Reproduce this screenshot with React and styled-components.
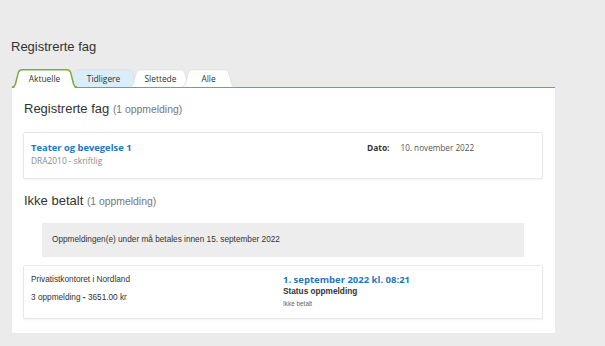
import React from "react";
import styled, { createGlobalStyle } from "styled-components";

const GREEN = "#7aac3b";
const BLUE = "#1f78bd";

const Global = createGlobalStyle`
  html, body { margin: 0; padding: 0; background: #ebebeb; }
  body { font-family: "Liberation Sans", Arial, sans-serif; color: #333; }
  * { box-sizing: border-box; }
`;

const Page = styled.div`
  padding: 39px 0 12px 12px;
  width: 555px;
`;

const PageTitle = styled.h1`
  margin: 0 0 14px -1px;
  font-size: 13px;
  line-height: 16px;
  font-weight: normal;
  color: #333;
`;

const TabRow = styled.div`
  display: flex;
  height: 18px;
  position: relative;
  z-index: 1;
`;

const TabItem = styled.div`
  position: relative;
  width: ${(p) => p.$w}px;
  height: 18px;
  margin-left: ${(p) => (p.$first ? 0 : -9)}px;
  z-index: ${(p) => p.$z};
  display: flex;
  align-items: center;
  justify-content: center;
  cursor: pointer;
`;

const TabShape = styled.svg`
  position: absolute;
  left: 0;
  top: 0;
  overflow: visible;
`;

const TabLabel = styled.span`
  position: relative;
  font-family: "Open Sans", sans-serif;
  font-size: 8.4px;
  line-height: 10px;
  color: #333;
  padding-top: 2px;
`;

const Panel = styled.section`
  background: #fff;
  border-top: 1.5px solid ${GREEN};
  padding: 13px 12px 13.5px 11px;
`;

const SectionTitle = styled.h2`
  margin: 0 0 0 1px;
  font-size: 13px;
  line-height: 16px;
  font-weight: normal;
  color: #333;
  & + * { margin-top: 13.5px; }
`;

const Count = styled.span`
  font-size: 10.4px;
  color: #777;
`;

const Card = styled.div`
  display: grid;
  grid-template-columns: ${(p) => p.$cols};
  border: 1px solid #e8e8e8;
  border-radius: 2px;
  box-shadow: 0 1px 2px rgba(0, 0, 0, 0.05);
  padding: ${(p) => p.$pad};
  margin-bottom: ${(p) => p.$mb || 0}px;
`;

const Col = styled.div`
  display: flex;
  flex-direction: column;
`;

const CourseName = styled.a`
  font-family: "Open Sans", sans-serif;
  font-weight: bold;
  font-size: 9.4px;
  line-height: 13px;
  color: ${BLUE};
  text-decoration: none;
`;

const CourseCode = styled.div`
  font-family: "Open Sans", sans-serif;
  font-size: 8.4px;
  line-height: 14px;
  color: #8a8a8a;
`;

const DateRow = styled.div`
  display: flex;
  gap: 11px;
  font-family: "Open Sans", sans-serif;
  font-size: 8.2px;
  line-height: 13px;
  color: #555;
`;

const DateLabel = styled.span`
  font-weight: bold;
  font-size: 8.4px;
  color: #333;
`;

const Notice = styled.div`
  margin: 13px 19px 8px;
  background: #ededed;
  padding: 11px 10px;
  font-size: 8.25px;
  line-height: 11.5px;
  color: #333;
`;

const PlainLine = styled.div`
  font-size: 8.25px;
  line-height: 12px;
  color: #333;
  margin-top: ${(p) => p.$mt || 0}px;
  b { font-weight: bold; }
`;

const StampDate = styled.a`
  font-family: "Open Sans", sans-serif;
  font-weight: bold;
  font-size: 9.5px;
  line-height: 12px;
  color: ${BLUE};
  text-decoration: none;
`;

const StatusLabel = styled.div`
  font-weight: bold;
  font-size: 8.25px;
  line-height: 11.5px;
  color: #333;
`;

const StatusValue = styled.div`
  font-size: 6.4px;
  line-height: 12px;
  color: #666;
`;

function tabPath(w, h, closed) {
  const s = 7;
  const d = `M0 ${h} Q2.6 ${h - 0.4} 3.4 ${h - 3} L${s - 0.6} 3.4 Q${s + 0.4} 0.75 ${s + 3} 0.75 L${w - s - 3} 0.75 Q${w - s - 0.4} 0.75 ${w - s + 0.6} 3.4 L${w - 3.4} ${h - 3} Q${w - 2.6} ${h - 0.4} ${w} ${h}`;
  return closed ? d + " Z" : d;
}

function Tab({ label, w, first, z, active, fill }) {
  const h = active ? 19.6 : 18;
  return (
    <TabItem $w={w} $first={first} $z={active ? 10 : z}>
      <TabShape width={w} height={20} viewBox={`0 0 ${w} 20`}>
        <path d={tabPath(w, h, true)} fill={fill} />
        <path
          d={tabPath(w, active ? 18.2 : 18, false)}
          fill="none"
          stroke={active ? GREEN : "#dedede"}
          strokeWidth={active ? 1.5 : 0.8}
        />
      </TabShape>
      <TabLabel>{label}</TabLabel>
    </TabItem>
  );
}

const tabs = [
  { label: "Aktuelle", w: 65, active: true, fill: "#fff" },
  { label: "Tidligere", w: 71, fill: "#d9edfa" },
  { label: "Slettede", w: 61, fill: "#fff" },
  { label: "Alle", w: 53, fill: "#fff" },
];

export default function App() {
  return (
    <>
      <Global />
      <Page>
        <PageTitle>Registrerte fag</PageTitle>
        <TabRow>
          {tabs.map((t, i) => (
            <Tab key={t.label} {...t} first={i === 0} z={i + 1} />
          ))}
        </TabRow>
        <Panel>
          <SectionTitle>
            Registrerte fag <Count>(1 oppmelding)</Count>
          </SectionTitle>
          <Card $cols="2fr 1fr" $pad="8px 7px 10.5px" $mb={14}>
            <Col>
              <CourseName href="#">Teater og bevegelse 1</CourseName>
              <CourseCode>DRA2010 - skriftlig</CourseCode>
            </Col>
            <DateRow>
              <DateLabel>Dato:</DateLabel>
              <span>10. november 2022</span>
            </DateRow>
          </Card>
          <SectionTitle>
            Ikke betalt <Count>(1 oppmelding)</Count>
          </SectionTitle>
          <Notice>Oppmeldingen(e) under må betales innen 15. september 2022</Notice>
          <Card $cols="1fr 1fr" $pad="8.5px 7px 8.5px">
            <Col>
              <PlainLine>Privatistkontoret i Nordland</PlainLine>
              <PlainLine $mt={6}>
                3 oppmelding <b>-</b> 3651.00 kr
              </PlainLine>
            </Col>
            <Col>
              <StampDate href="#">1. september 2022 kl. 08:21</StampDate>
              <StatusLabel>Status oppmelding</StatusLabel>
              <StatusValue>Ikke betalt</StatusValue>
            </Col>
          </Card>
        </Panel>
      </Page>
    </>
  );
}
